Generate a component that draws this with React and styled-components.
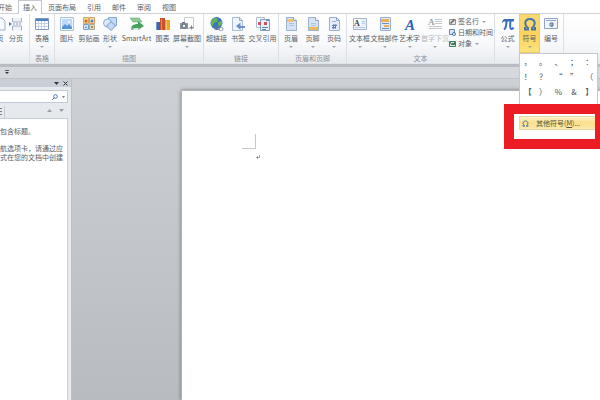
import React from "react";
import styled, { createGlobalStyle } from "styled-components";

const GlobalStyle = createGlobalStyle`
  * {
    box-sizing: border-box;
  }

  body {
    margin: 0;
    background: #fff;
    color: #5a5d62;
    font-family: "Noto Sans CJK SC", "Noto Sans", sans-serif;
    font-size: 7px;
    line-height: 9px;
  }

  button,
  input {
    margin: 0;
    padding: 0;
    border: 0;
    background: none;
    color: inherit;
    font: inherit;
  }
`;

const Window = styled.div`
  display: flex;
  flex-direction: column;
  min-height: 100vh;
  overflow: hidden;
`;

const TabBar = styled.nav`
  display: flex;
  gap: 1px;
  height: 14px;
  border-bottom: 1px solid #cfd3d9;
`;

const Tab = styled.button`
  flex: none;
  height: 14px;
  padding: 0 4px;
  border: solid ${(p) => (p.$active ? "#c3c8d0" : "transparent")};
  border-width: 1px 1px 0;
  background: ${(p) => (p.$active ? "#fff" : "none")};

  &:first-child {
    padding-left: 0;
    border-left: 0;
    margin-left: -2px;
  }
`;

const Ribbon = styled.div`
  position: relative;
  z-index: 2;
  display: flex;
  height: 50px;
  background: linear-gradient(#fff, #f8f9fb 60%, #e8ebef);
  border-bottom: 1px solid #dfe2e6;
`;

const Group = styled.section`
  display: flex;
  flex: none;
  flex-direction: column;
  justify-content: space-between;
  border-right: 1px solid #dcdfe4;
`;

const ClippedGroup = styled(Group)`
  width: 30px;
  overflow: hidden;
  align-items: flex-end;
`;

const Tools = styled.div`
  display: flex;
  padding: 0 1px;
`;

const GroupName = styled.h2`
  margin: 0;
  color: #8b9099;
  font-size: 7px;
  font-weight: normal;
  line-height: 9px;
  text-align: center;
`;

const Tool = styled.button`
  display: flex;
  flex: none;
  flex-direction: column;
  align-items: center;
  width: ${(p) => p.$width}px;
  height: 39px;
  padding-top: 3px;
  color: ${(p) => (p.$disabled ? "#b4b6ba" : "#5a5d62")};
  white-space: nowrap;
  background: ${(p) =>
    p.$open ? "linear-gradient(#fbd976, #fcd45c 50%, #fde27e)" : "none"};
  box-shadow: ${(p) => (p.$open ? "inset 0 0 0 1px #f0cb62" : "none")};

  svg {
    flex: none;
    display: block;
    margin-bottom: 3px;
  }
`;

const Caret = styled.span`
  margin-top: 3px;
  border: solid transparent;
  border-width: 2px 2px 0;
  border-top-color: #a0a3a8;
`;

const SmallTools = styled.div`
  display: flex;
  flex-direction: column;
  padding-top: 2px;
`;

const SmallTool = styled.button`
  display: flex;
  align-items: center;
  gap: 2px;
  height: 11px;
  white-space: nowrap;

  span {
    margin: 0 0 0 1px;
  }
`;

const MenuAnchor = styled.div`
  position: relative;
`;

const Menu = styled.div`
  position: absolute;
  top: 39px;
  left: 0;
  width: 79px;
  background: #fff;
  border: 1px solid #c5c9cf;
  border-bottom: 0;
`;

const SymbolGrid = styled.div`
  display: grid;
  grid-template-columns: repeat(5, 1fr);
  padding-bottom: 5px;
`;

const SymbolButton = styled.button`
  height: 15px;
  color: #505359;
  font-size: 8px;
  line-height: 15px;
`;

const Highlight = styled.div`
  margin: 0 -4px 0 -16px;
  padding: 2px 0 9px 5px;
  background: #fff;
  border: solid #ec1c24;
  border-width: 10px 6px 10px 10px;
`;

const MenuItem = styled.button`
  display: flex;
  align-items: center;
  gap: 7px;
  width: 100%;
  height: 14px;
  padding-left: 2px;
  color: #55543f;
  white-space: nowrap;
  background: linear-gradient(#fdf3cc, #fbe08a 45%, #fbe9ab);
  border: 1px solid #ead9a8;
  border-right: 0;
`;

const QuickBar = styled.div`
  display: flex;
  align-items: center;
  height: 14px;
  padding-left: 5px;
  background: #d5d8dc;
  border-top: 3px solid #b9bdc3;
`;

const Workspace = styled.div`
  display: flex;
  flex: 1;
  background: linear-gradient(#cdd1d5, #b8bbc0);
  border-top: 1px solid #bec3c9;
`;

const SidePanel = styled.aside`
  display: flex;
  flex: none;
  flex-direction: column;
  width: 72px;
  padding-right: 3px;
  background: #e6eaee;
  border-right: 1px solid #bcc1c7;
`;

const PanelHeader = styled.header`
  display: flex;
  align-items: center;
  justify-content: flex-end;
  gap: 4px;
  height: 8px;
  margin-right: -3px;
  padding-right: 3px;
  background: #c9cfd6;

  button {
    display: flex;
  }
`;

const SearchBox = styled.div`
  display: flex;
  align-items: center;
  gap: 4px;
  height: 13px;
  margin-top: 3px;
  padding-right: 2px;
  background: #fff;
  border: 1px solid #c3c9d0;
  border-left: 0;

  input {
    flex: 1;
    min-width: 0;
    outline: none;
  }

  button {
    display: flex;
  }
`;

const PanelTools = styled.div`
  display: flex;
  align-items: center;
  gap: 7px;
  height: 15px;
  padding-right: 4px;

  button {
    display: flex;
  }
`;

const OutlineTab = styled.button`
  width: 5px;
  height: 12px;
  margin: 2px auto 0 0;
  align-items: center;
  border-right: 1px solid #c9ced4;
`;

const PanelBody = styled.div`
  flex: 1;
  padding-top: 8px;
  background: #fff;
  border: solid #c9ced4;
  border-width: 1px 1px 0 0;
  white-space: nowrap;

  p {
    margin: 0 0 8px;
  }
`;

const Paper = styled.main`
  flex: 1;
  margin: 11px 0 0 109px;
  padding: 43px 0 0 60px;
  background: #fff;
  border: solid #aeb1b6;
  border-width: 1px 0 0 1px;
  box-shadow: 0 0 4px rgba(0, 0, 0, 0.4);
`;

const MarginCorner = styled.div`
  width: 14px;
  height: 15px;
  border: solid #c8c8c8;
  border-width: 0 1px 1px 0;
`;

const ReturnMark = styled.svg`
  display: block;
  margin: 6px 0 0 14px;
`;

const Icon = ({ children, width = 14, height = 14 }) => (
  <svg
    width={width}
    height={height}
    viewBox={`0 0 ${width} ${height}`}
    fill="none"
    aria-hidden="true"
  >
    {children}
  </svg>
);

const BlankPageIcon = () => (
  <Icon>
    <path d="M3 1h6l3 3v9H3z" fill="#f8fbff" stroke="#9fb0c8" />
  </Icon>
);

const PageBreakIcon = () => (
  <Icon>
    <path d="M3.500 1v4h9V1M3.500 13.500V9h9v4.500" fill="#eef3fa" stroke="#a1adbf" />
    <path d="M4 7h9" stroke="#7f93b3" strokeDasharray="2 1" />
    <path d="M0 5l3 2-3 2z" fill="#4f78b4" />
  </Icon>
);

const TableIcon = () => (
  <Icon>
    <path d="M.5 1.500h13v11H.5z" fill="#fff" stroke="#8097b8" />
    <path d="M1 2h12v2H1z" fill="#4d7fc4" />
    <path d="M1 6.500h12M1 9.500h12M3.500 4v8M6.500 4v8M9.500 4v8" stroke="#c3d0e3" />
  </Icon>
);

const PictureIcon = () => (
  <Icon>
    <path d="M.5.500h13v13H.5z" fill="#f1f7fe" stroke="#abc2df" />
    <path d="M2 2h10v10H2z" fill="#bcdaf7" />
    <path d="M2 10l3-3 2 2 2-2 3 3v2H2z" fill="#5595d8" />
    <circle cx="9" cy="5" r="1" fill="#fff" />
  </Icon>
);

const ClipArtIcon = () => (
  <Icon>
    <path d="M1.500.500h5v6h-5z" fill="#f5d77d" stroke="#cfa776" />
    <path d="M7.500.500h5v6h-5z" fill="#f7dfa5" stroke="#e09a60" />
    <path d="M1.500 7.500h5v5h-5z" fill="#d9e9fb" stroke="#759ecd" />
    <path d="M7.500 7.500h5v5h-5z" fill="#d8e8d0" stroke="#a5aa8a" />
    <circle cx="4" cy="4" r="1.500" fill="#d96134" />
    <circle cx="10" cy="4" r="1.500" fill="#4b85c8" />
    <path d="M3 11l1-2 1 2z" fill="#4272b0" />
    <path d="M9 9h2v2H9z" fill="#c97a34" />
  </Icon>
);

const ShapesIcon = () => (
  <Icon>
    <path d="M5.500.500h8v8h-8z" fill="#c5daf4" stroke="#7fa6d8" />
    <circle cx="4.500" cy="6" r="4" fill="#dbe9fa" stroke="#8aabd6" />
    <path d="M8 4.500l4.500 4.500L8 13.500 3.500 9z" fill="#c2d8f4" stroke="#7298cc" />
  </Icon>
);

const SmartArtIcon = () => (
  <Icon>
    <path d="M0 1h9l3 4H3z" fill="#8fcb95" stroke="#6aa877" strokeWidth=".6" />
    <path d="M1 13c0-4 2-6 7-6V4l6 5-6 4v-2c-3 0-4 0-5 2z" fill="#46a258" />
    <path d="M1 11.500h10v1H1z" fill="#c3d0de" />
  </Icon>
);

const ChartIcon = () => (
  <Icon>
    <path d="M0 5h4v8H0z" fill="#3669af" />
    <path d="M4 1h5v12H4z" fill="#c9502b" />
    <path d="M9 3h5v10H9z" fill="#f0a526" />
    <path d="M0 5h1v8H0z" fill="#6d9bd3" />
    <path d="M5 2h1v11H5z" fill="#ea8860" />
    <path d="M10 4h1v9h-1z" fill="#f9cb69" />
  </Icon>
);

const ScreenshotIcon = () => (
  <Icon>
    <path d="M4.500.500h9v11h-9z" fill="#fff" stroke="#c8ccd2" />
    <path d="M0 6h8v6H0z" fill="#8a929d" />
    <path d="M2 5h3v1H2z" fill="#69717c" />
    <circle cx="4" cy="9" r="2" fill="#e5edf6" stroke="#5a626d" />
    <path d="M11.500 8.500v4M9.500 10.500h4" stroke="#7c848f" />
  </Icon>
);

const HyperlinkIcon = () => (
  <Icon>
    <circle cx="6.500" cy="6" r="6" fill="#3575bd" />
    <path d="M2 3c2-3 5-2 6-1L7 5 4 6 3 9C0 7 1 5 2 3zM8 5l4-1v4L8 9z" fill="#66b25c" />
    <rect x="4.500" y="9.500" width="5" height="3" rx="1.500" stroke="#687687" />
    <rect x="9" y="10.500" width="4" height="3" rx="1.500" stroke="#8695a6" />
  </Icon>
);

const BookmarkIcon = () => (
  <Icon>
    <path d="M1.500.500h7l3 3v10h-10z" fill="#eff5fc" stroke="#a9bbd6" />
    <path d="M8.500.500v3h3" stroke="#93aacb" />
    <path d="M14 9H9.500V5.500L5 9l4.500 4v-2H14z" fill="#6b91cc" />
  </Icon>
);

const CrossRefIcon = () => (
  <Icon>
    <path d="M.5.500h8v10h-8z" fill="#f4f7fb" stroke="#b4c0d1" />
    <path d="M4.500 2.500h9v11h-9z" fill="#e8f0fa" stroke="#86a0c3" />
    <path d="M2 5h3v3H2zM8 5h3v3H8z" fill="#c95560" />
    <path d="M6 10.500h6M6 12.500h4M10 3.500h3" stroke="#5c86be" />
  </Icon>
);

const PageIcon = ({ band, bandY }) => (
  <Icon>
    <path d="M2.500.500h7l3 3v10h-10z" fill="#d5e3f5" stroke="#9cb1cf" />
    <path d="M9.500.500v3h3" fill="#fff" stroke="#8ba4c8" />
    <path d={`M3 ${bandY}h${bandY > 5 ? 9 : 6}v3H3z`} fill={band} />
    <path d="M5 6.500h5M5 8.500h5" stroke="#b1c4df" />
  </Icon>
);

const PageNumberIcon = () => (
  <Icon>
    <path d="M2.500.500h7l3 3v10h-10z" fill="#e4edf9" stroke="#9cb1cf" />
    <path d="M9.500.500v3h3" stroke="#8ba4c8" />
    <path d="M5 4.500h4" stroke="#9db4d3" />
    <path d="M7 7L6 12M9 7l-1 5M5 8.500h5M5 10.500h4" stroke="#5d7fae" />
  </Icon>
);

const IconLetter = styled.text`
  font-family: "Liberation Serif", serif;
  font-weight: bold;
`;

const TextBoxIcon = () => (
  <Icon>
    <path d="M.5 1.500h13v11H.5z" fill="#edf3fb" stroke="#a3b3ca" />
    <path d="M1 2h7v7H1z" fill="#fff" />
    <IconLetter x="1" y="9" fontSize="8" fill="#303c52">A</IconLetter>
    <path d="M9 4.500h3M9 6.500h3M2 10.500h10" stroke="#b9c9df" />
  </Icon>
);

const QuickPartsIcon = () => (
  <Icon>
    <path d="M2.500.500h10v13h-10z" fill="#dfe9f7" stroke="#9ab0cf" />
    <path d="M3 2h8v3H3zM6 8h5v2H6z" fill="#ecae5c" />
    <path d="M4 6.500h7M4 11.500h7" stroke="#6e8db8" />
  </Icon>
);

const WordArtIcon = () => (
  <Icon>
    <IconLetter x="2" y="13" fontSize="15" fontStyle="italic" fill="#2d63b5">A</IconLetter>
  </Icon>
);

const DropCapIcon = () => (
  <Icon>
    <IconLetter x="0" y="8" fontSize="9" fill="#9da0a5">A</IconLetter>
    <path d="M7 2.500h7M7 4.500h7M7 6.500h7M1 9.500h13M1 11.500h13" stroke="#c5c7ca" />
  </Icon>
);

const PiIcon = () => (
  <Icon>
    <path d="M1 5.500c.5-2.500 1.500-3.500 3-3.500h9v2.500H4C3 4.500 2.300 4.700 1.800 5.700z" fill="#3670b7" />
    <path
      d="M5.500 4c0 4-.5 7-2.500 8.500M9.500 4c-.5 4-.6 8 1 8 1 0 1.500-.5 2-1.500"
      stroke="#3670b7"
      strokeWidth="2"
    />
  </Icon>
);

const OmegaIcon = ({ size = 14 }) => (
  <svg width={size} height={size} viewBox="0 0 14 14" fill="none" aria-hidden="true">
    <path
      d="M2 10v2.500h3V11C3 9.500 2.300 8 2.300 6.500c0-3 2-4.500 4.700-4.500s4.700 1.500 4.700 4.500C11.700 8 11 9.500 9 11v1.500h3V10"
      stroke="#4576a7"
      strokeWidth="2"
    />
  </svg>
);

const NumberIcon = () => (
  <Icon>
    <path d="M.5 1.500h13v10H.5z" fill="#f3f7fc" stroke="#8fa3c1" />
    <path d="M2 3.500h10" stroke="#8fa3c1" />
    <path d="M6 6h3v3H6zM8 6v4" stroke="#54749f" />
  </Icon>
);

const SignatureIcon = () => (
  <Icon width={7} height={7}>
    <path d="M.5 1.500h6v5h-6z" fill="#e3e9f0" stroke="#8b929c" />
    <path d="M1 5l4-4 1 1-4 4z" fill="#705a42" />
  </Icon>
);

const DateIcon = () => (
  <Icon width={7} height={7}>
    <path d="M.5.500h5v5h-5z" fill="#dce8f7" stroke="#6687b3" />
    <circle cx="5" cy="5" r="1.500" fill="#fff" stroke="#3e6da9" />
  </Icon>
);

const ObjectIcon = () => (
  <Icon width={7} height={7}>
    <path d="M.5 1.500h6v5h-6z" fill="#dcebdc" stroke="#3f8061" />
    <path d="M1 2l2 3 1-2 1 2 1-3" stroke="#2b6150" />
  </Icon>
);

const tabs = ["开始", "插入", "页面布局", "引用", "邮件", "审阅", "视图"];

const groups = [
  {
    name: "表格",
    tools: [{ label: "表格", icon: <TableIcon />, width: 22, caret: true }],
  },
  {
    name: "插图",
    tools: [
      { label: "图片", icon: <PictureIcon />, width: 22 },
      { label: "剪贴画", icon: <ClipArtIcon />, width: 22 },
      { label: "形状", icon: <ShapesIcon />, width: 20, caret: true },
      { label: "SmartArt", icon: <SmartArtIcon />, width: 33 },
      { label: "图表", icon: <ChartIcon />, width: 19 },
      { label: "屏幕截图", icon: <ScreenshotIcon />, width: 30, caret: true },
    ],
  },
  {
    name: "链接",
    tools: [
      { label: "超链接", icon: <HyperlinkIcon />, width: 23 },
      { label: "书签", icon: <BookmarkIcon />, width: 20 },
      { label: "交叉引用", icon: <CrossRefIcon />, width: 29 },
    ],
  },
  {
    name: "页眉和页脚",
    tools: [
      { label: "页眉", icon: <PageIcon band="#efc276" bandY={2} />, width: 22, caret: true },
      { label: "页脚", icon: <PageIcon band="#eeb85c" bandY={10} />, width: 21, caret: true },
      { label: "页码", icon: <PageNumberIcon />, width: 22, caret: true },
    ],
  },
];

const textTools = [
  { label: "文本框", icon: <TextBoxIcon />, width: 23, caret: true },
  { label: "文档部件", icon: <QuickPartsIcon />, width: 27, caret: true },
  { label: "艺术字", icon: <WordArtIcon />, width: 23, caret: true },
  { label: "首字下沉", icon: <DropCapIcon />, width: 28, caret: true, disabled: true },
];

const symbols = "，。、；：！？“”（【）%&】".split("");

const RibbonTool = ({ tool }) => (
  <Tool
    $width={tool.width}
    $open={tool.open}
    $disabled={tool.disabled}
    disabled={tool.disabled}
  >
    {tool.icon}
    {tool.label}
    {tool.caret && <Caret />}
  </Tool>
);

const SymbolMenu = () => (
  <Menu>
    <SymbolGrid>
      {symbols.map((symbol) => (
        <SymbolButton key={symbol}>{symbol}</SymbolButton>
      ))}
    </SymbolGrid>
    <Highlight>
      <MenuItem>
        <OmegaIcon size={7} />
        <span>
          其他符号(<u>M</u>)...
        </span>
      </MenuItem>
    </Highlight>
  </Menu>
);

const NavigationPanel = () => (
  <SidePanel>
    <PanelHeader>
      <button aria-label="选项">
        <Icon width={5} height={5}>
          <path d="M0 1h5L2.500 4z" fill="#34383e" />
        </Icon>
      </button>
      <button aria-label="关闭">
        <Icon width={5} height={5}>
          <path d="M.5.500l4 4M4.500.500l-4 4" stroke="#34383e" />
        </Icon>
      </button>
    </PanelHeader>
    <SearchBox>
      <input type="text" aria-label="搜索文档" />
      <button aria-label="搜索">
        <Icon width={6} height={6}>
          <circle cx="3.500" cy="2.500" r="1.800" stroke="#4a7ab8" />
          <path d="M2.200 3.800L.3 5.700" stroke="#3b5f92" />
        </Icon>
      </button>
      <button aria-label="搜索选项">
        <Icon width={3} height={2}>
          <path d="M0 0h3L1.500 2z" fill="#777b82" />
        </Icon>
      </button>
    </SearchBox>
    <PanelTools>
      <OutlineTab aria-label="浏览标题">
        <Icon width={3} height={7}>
          <path d="M0 .5h2M0 3.500h2M0 6.500h2" stroke="#7d838b" />
        </Icon>
      </OutlineTab>
      <button aria-label="上一标题">
        <Icon width={5} height={3}>
          <path d="M0 3h5L2.500 0z" fill="#9a9fa6" />
        </Icon>
      </button>
      <button aria-label="下一标题">
        <Icon width={5} height={3}>
          <path d="M0 0h5L2.500 3z" fill="#9a9fa6" />
        </Icon>
      </button>
    </PanelTools>
    <PanelBody>
      <p>包含标题。</p>
      <p>
        航选项卡，请通过应
        <br />
        式在您的文档中创建
      </p>
    </PanelBody>
  </SidePanel>
);

export default function App() {
  return (
    <>
      <GlobalStyle />
      <Window>
        <TabBar>
          {tabs.map((tab) => (
            <Tab key={tab} $active={tab === "插入"}>
              {tab}
            </Tab>
          ))}
        </TabBar>
        <Ribbon>
          <ClippedGroup>
            <Tools>
              <RibbonTool tool={{ label: "页", icon: <BlankPageIcon />, width: 8 }} />
              <RibbonTool tool={{ label: "分页", icon: <PageBreakIcon />, width: 24 }} />
            </Tools>
          </ClippedGroup>
          {groups.map((group) => (
            <Group key={group.name}>
              <Tools>
                {group.tools.map((tool) => (
                  <RibbonTool key={tool.label} tool={tool} />
                ))}
              </Tools>
              <GroupName>{group.name}</GroupName>
            </Group>
          ))}
          <Group>
            <Tools>
              {textTools.map((tool) => (
                <RibbonTool key={tool.label} tool={tool} />
              ))}
              <SmallTools>
                <SmallTool>
                  <SignatureIcon />
                  签名行
                  <Caret />
                </SmallTool>
                <SmallTool>
                  <DateIcon />
                  日期和时间
                </SmallTool>
                <SmallTool>
                  <ObjectIcon />
                  对象
                  <Caret />
                </SmallTool>
              </SmallTools>
            </Tools>
            <GroupName>文本</GroupName>
          </Group>
          <Group>
            <Tools>
              <RibbonTool tool={{ label: "公式", icon: <PiIcon />, width: 23, caret: true }} />
              <MenuAnchor>
                <RibbonTool
                  tool={{ label: "符号", icon: <OmegaIcon />, width: 21, caret: true, open: true }}
                />
                <SymbolMenu />
              </MenuAnchor>
              <RibbonTool tool={{ label: "编号", icon: <NumberIcon />, width: 22 }} />
            </Tools>
          </Group>
        </Ribbon>
        <QuickBar>
          <Icon width={4} height={5}>
            <path d="M0 .5h4" stroke="#55595f" />
            <path d="M0 2h4L2 4z" fill="#33363b" />
          </Icon>
        </QuickBar>
        <Workspace>
          <NavigationPanel />
          <Paper>
            <MarginCorner />
            <ReturnMark width="4" height="4" viewBox="0 0 4 4" fill="none">
              <path d="M3.500 0v2.500H1" stroke="#a5a8ac" />
              <path d="M0 2.500L2 1v3z" fill="#7f8286" />
            </ReturnMark>
          </Paper>
        </Workspace>
      </Window>
    </>
  );
}
